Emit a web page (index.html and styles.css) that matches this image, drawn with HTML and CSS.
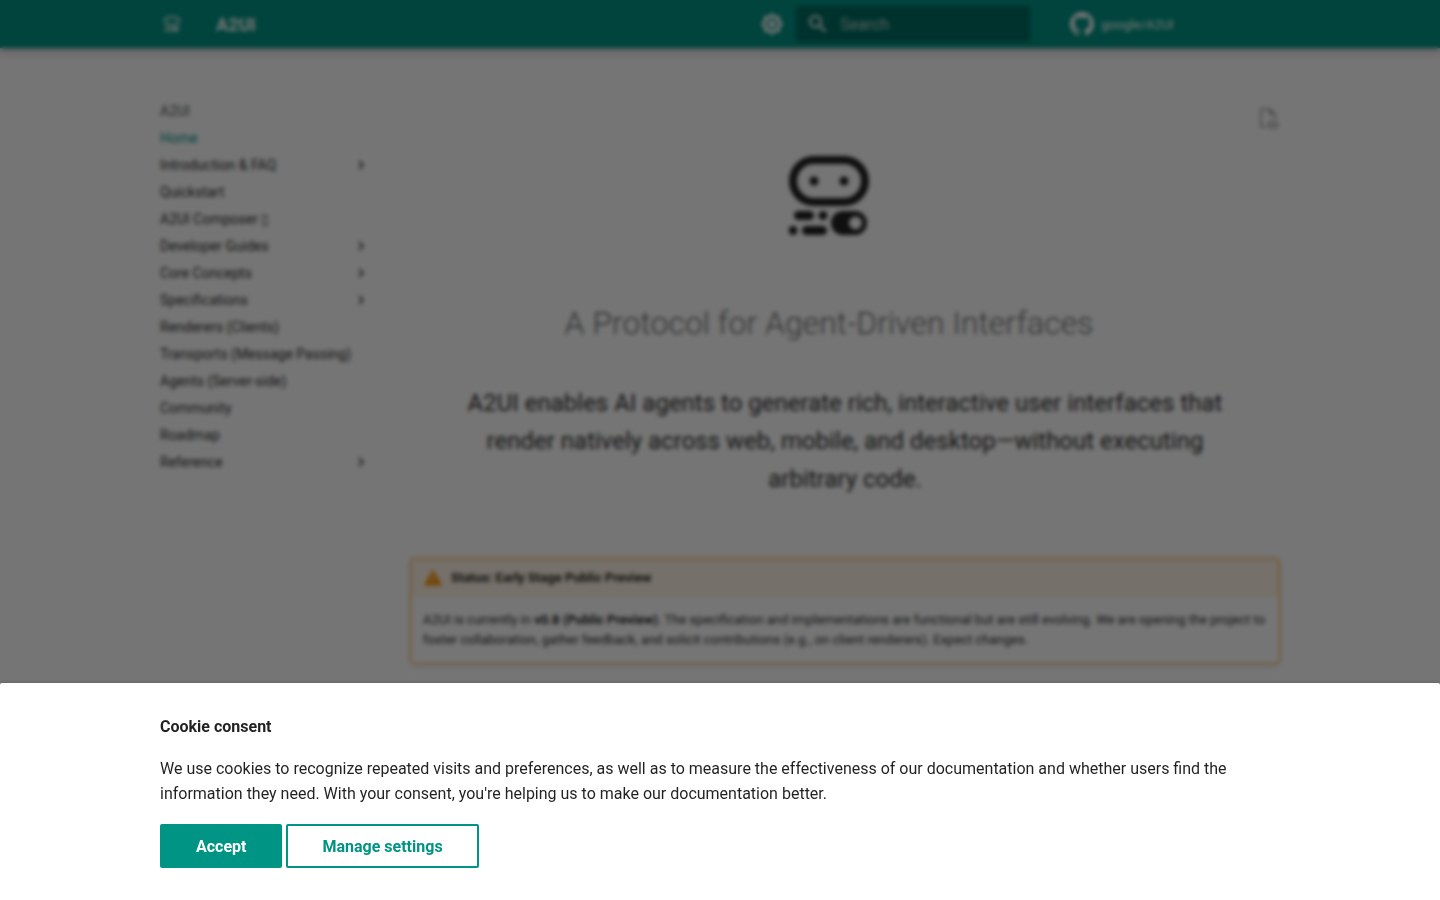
FILE: index.html
```html
<!DOCTYPE html>
<html lang="en">
<head>
    <meta charset="UTF-8">
    <meta name="viewport" content="width=device-width, initial-scale=1.0">
    <title>A2UI</title>
    <link rel="stylesheet" href="styles.css">
</head>
<body>
    <svg class="symbols" aria-hidden="true">
        <symbol id="logo" viewBox="0 0 80 80">
            <rect x="4" y="4" width="72" height="42" rx="21" fill="none" stroke="currentColor" stroke-width="8"/>
            <circle cx="25" cy="25" r="4.5"/>
            <circle cx="55" cy="25" r="4.5"/>
            <rect x="5" y="55" width="20" height="9" rx="4.5"/>
            <circle cx="34" cy="59.5" r="4.5"/>
            <circle cx="4" cy="74.5" r="4.5"/>
            <rect x="13" y="70" width="25" height="9" rx="4.5"/>
            <path fill-rule="evenodd" d="M54 55h12a12 12 0 0 1 0 24H54a12 12 0 0 1 0-24zm12.5 5.5a6.5 6.5 0 1 0 0 13 6.5 6.5 0 0 0 0-13z"/>
        </symbol>
        <symbol id="chevron" viewBox="0 0 24 24">
            <path d="M8.59 16.58 13.17 12 8.59 7.41 10 6l6 6-6 6z"/>
        </symbol>
    </svg>

    <header class="header">
        <nav class="header-inner" aria-label="Header">
            <a class="header-logo" href="#" aria-label="A2UI"><svg><use href="#logo"/></svg></a>
            <span class="header-title">A2UI</span>
            <button class="icon-button" type="button" aria-label="Switch theme">
                <svg viewBox="0 0 24 24"><path fill-rule="evenodd" d="M20 8.69V4h-4.69L12 .69 8.69 4H4v4.69L.69 12 4 15.31V20h4.69L12 23.31 15.31 20H20v-4.69L23.31 12zM12 6a6 6 0 1 1 0 12 6 6 0 0 1 0-12z"/><circle cx="12" cy="12" r="3.5"/></svg>
            </button>
            <label class="search">
                <svg viewBox="0 0 24 24"><path d="M9.5 3A6.5 6.5 0 0 1 16 9.5c0 1.61-.59 3.09-1.56 4.23l.27.27h.79l5 5-1.5 1.5-5-5v-.79l-.27-.27A6.52 6.52 0 0 1 9.5 16 6.5 6.5 0 0 1 3 9.5 6.5 6.5 0 0 1 9.5 3m0 2C7 5 5 7 5 9.5S7 14 9.5 14 14 12 14 9.5 12 5 9.5 5"/></svg>
                <input type="text" placeholder="Search" aria-label="Search">
            </label>
            <a class="source" href="#">
                <svg viewBox="0 0 16 16"><path d="M8 0C3.58 0 0 3.58 0 8c0 3.54 2.29 6.53 5.47 7.59.4.07.55-.17.55-.38 0-.19-.01-.82-.01-1.49-2.01.37-2.53-.49-2.69-.94-.09-.23-.48-.94-.82-1.13-.28-.15-.68-.52-.01-.53.63-.01 1.08.58 1.23.82.72 1.21 1.87.87 2.33.66.07-.52.28-.87.51-1.07-1.78-.2-3.64-.89-3.64-3.95 0-.87.31-1.59.82-2.15-.08-.2-.36-1.02.08-2.12 0 0 .67-.21 2.2.82.64-.18 1.32-.27 2-.27s1.36.09 2 .27c1.53-1.04 2.2-.82 2.2-.82.44 1.1.16 1.92.08 2.12.51.56.82 1.27.82 2.15 0 3.07-1.87 3.75-3.65 3.95.29.25.54.73.54 1.48 0 1.07-.01 1.93-.01 2.2 0 .21.15.46.55.38A8.01 8.01 0 0 0 16 8c0-4.42-3.58-8-8-8"/></svg>
                google/A2UI
            </a>
        </nav>
    </header>

    <div class="main">
        <nav class="sidebar" aria-label="Navigation">
            <ul>
                <li class="nav-title">A2UI</li>
                <li><a class="active" href="#">Home</a></li>
                <li><a href="#">Introduction &amp; FAQ <svg><use href="#chevron"/></svg></a></li>
                <li><a href="#">Quickstart</a></li>
                <li><a href="#">A2UI Composer ▯</a></li>
                <li><a href="#">Developer Guides <svg><use href="#chevron"/></svg></a></li>
                <li><a href="#">Core Concepts <svg><use href="#chevron"/></svg></a></li>
                <li><a href="#">Specifications <svg><use href="#chevron"/></svg></a></li>
                <li><a href="#">Renderers (Clients)</a></li>
                <li><a href="#">Transports (Message Passing)</a></li>
                <li><a href="#">Agents (Server-side)</a></li>
                <li><a href="#">Community</a></li>
                <li><a href="#">Roadmap</a></li>
                <li><a href="#">Reference <svg><use href="#chevron"/></svg></a></li>
            </ul>
        </nav>

        <main class="content">
            <div class="hero">
                <div class="hero-text">
                    <svg class="hero-logo"><use href="#logo"/></svg>
                    <h1>A Protocol for Agent-Driven Interfaces</h1>
                </div>
                <a class="view-source" href="#" aria-label="View source of this page">
                    <svg viewBox="0 0 24 24"><path d="M17 18c.56 0 1 .44 1 1s-.44 1-1 1-1-.44-1-1 .44-1 1-1m0-3c-2.73 0-5.06 1.66-6 4 .94 2.34 3.27 4 6 4s5.06-1.66 6-4c-.94-2.34-3.27-4-6-4m0 6.5a2.5 2.5 0 0 1-2.5-2.5 2.5 2.5 0 0 1 2.5-2.5 2.5 2.5 0 0 1 2.5 2.5 2.5 2.5 0 0 1-2.5 2.5M9.27 20H6V4h7v5h5v4.07c.7.08 1.36.25 2 .49V8l-6-6H6a2 2 0 0 0-2 2v16a2 2 0 0 0 2 2h4.5a8.15 8.15 0 0 1-1.23-2"/></svg>
                </a>
            </div>
            <p class="lead">A2UI enables AI agents to generate rich, interactive user interfaces that render natively across web, mobile, and desktop—without executing arbitrary code.</p>

            <div class="admonition">
                <p class="admonition-title">
                    <svg viewBox="0 0 24 24"><path d="M13 14h-2V9h2m0 9h-2v-2h2M1 21h22L12 2z"/></svg>
                    Status: Early Stage Public Preview
                </p>
                <p class="admonition-text">A2UI is currently in <strong>v0.8 (Public Preview)</strong>. The specification and implementations are functional but are still evolving. We are opening the project to foster collaboration, gather feedback, and solicit contributions (e.g., on client renderers). Expect changes.</p>
            </div>
        </main>
    </div>

    <div class="overlay"></div>
    <aside class="consent" role="dialog" aria-labelledby="consent-title">
        <form class="consent-inner">
            <h4 id="consent-title">Cookie consent</h4>
            <p>We use cookies to recognize repeated visits and preferences, as well as to measure the effectiveness of our documentation and whether users find the information they need. With your consent, you're helping us to make our documentation better.</p>
            <div class="consent-controls">
                <button class="button button-primary" type="button">Accept</button>
                <button class="button" type="button">Manage settings</button>
            </div>
        </form>
    </aside>
</body>
</html>
```

FILE: styles.css
```css
* {
    box-sizing: border-box;
    margin: 0;
    padding: 0;
}

body {
    min-height: 100vh;
    background: white;
    color: rgba(0, 0, 0, 0.87);
    font-family: Roboto, "Liberation Sans", sans-serif;
    font-size: 16px;
    line-height: 25px;
    overflow: hidden;
}

a {
    color: inherit;
    text-decoration: none;
}

svg {
    display: block;
    fill: currentColor;
    flex-shrink: 0;
}

.symbols {
    display: none;
}

/* header */
.header {
    background: #009485;
    color: white;
    box-shadow: 0 0 4px rgba(0, 0, 0, 0.1), 0 4px 8px rgba(0, 0, 0, 0.2);
}

.header-inner {
    display: flex;
    align-items: center;
    max-width: 1120px;
    height: 48px;
    margin: 0 auto;
}

.header-logo svg {
    width: 16px;
    height: 16px;
    margin: 0 4px;
}

.header-title {
    flex: 1;
    margin-left: 32px;
    font-size: 18px;
    font-weight: bold;
}

.icon-button {
    border: 0;
    background: none;
    color: inherit;
}

.icon-button svg {
    width: 24px;
    height: 24px;
}

.search {
    display: flex;
    align-items: center;
    gap: 10px;
    width: 234px;
    height: 36px;
    margin: 0 40px 0 12px;
    padding: 0 10px;
    border-radius: 2px;
    background: rgba(0, 0, 0, 0.26);
}

.search svg {
    width: 24px;
    height: 24px;
}

.search input {
    width: 100%;
    border: 0;
    background: none;
    color: inherit;
    font: inherit;
}

.search input::placeholder {
    color: rgba(255, 255, 255, 0.7);
}

.source {
    display: flex;
    align-items: center;
    gap: 7px;
    width: 210px;
    font-size: 13px;
}

.source svg {
    width: 24px;
    height: 24px;
}

/* page */
.main {
    display: flex;
    gap: 40px;
    max-width: 1120px;
    margin: 0 auto;
    padding-top: 54px;
}

.sidebar {
    width: 210px;
    flex-shrink: 0;
    font-size: 14px;
    line-height: 18px;
}

.sidebar ul {
    list-style: none;
}

.sidebar li {
    margin-bottom: 9px;
}

.sidebar a {
    display: flex;
    align-items: center;
    justify-content: space-between;
}

.sidebar svg {
    width: 18px;
    height: 18px;
}

.nav-title {
    color: rgba(0, 0, 0, 0.7);
}

.sidebar .active {
    color: #009485;
}

.content {
    flex: 1;
}

.hero {
    display: flex;
    gap: 8px;
    padding-top: 4px;
}

.hero-text {
    flex: 1;
    padding-top: 50px;
    text-align: center;
}

.hero-logo {
    width: 80px;
    height: 80px;
    margin: 0 auto 66px;
    overflow: visible;
}

.hero h1 {
    color: rgba(0, 0, 0, 0.6);
    font-size: 32px;
    font-weight: 300;
    line-height: 42px;
}

.view-source {
    height: 24px;
    color: rgba(0, 0, 0, 0.32);
}

.view-source svg {
    width: 24px;
    height: 24px;
}

.lead {
    margin: 40px 0 60px;
    padding: 0 40px;
    font-size: 24px;
    line-height: 38px;
    text-align: center;
}

.admonition {
    border: 1px solid #ff9100;
    border-radius: 4px;
    box-shadow: 0 4px 10px rgba(0, 0, 0, 0.05), 0 0 1px rgba(0, 0, 0, 0.1);
    font-size: 13px;
    line-height: 20px;
}

.admonition-title {
    display: flex;
    align-items: center;
    gap: 8px;
    padding: 9px 12px;
    background: rgba(255, 145, 0, 0.1);
    font-weight: bold;
}

.admonition-title svg {
    width: 20px;
    height: 20px;
    color: #ff9100;
}

.admonition-text {
    padding: 13px 8px 13px 12px;
}

/* cookie consent */
.overlay {
    position: fixed;
    inset: 0;
    background: rgba(0, 0, 0, 0.54);
    backdrop-filter: blur(2px);
}

.consent {
    position: fixed;
    right: 0;
    bottom: 0;
    left: 0;
    padding: 31px 24px 32px;
    border-radius: 2px 2px 0 0;
    background: white;
    box-shadow: 0 0 4px rgba(0, 0, 0, 0.2);
}

.consent-inner {
    max-width: 1120px;
    margin: 0 auto;
}

.consent h4 {
    margin-bottom: 17px;
}

.consent p {
    margin-bottom: 18px;
}

.consent-controls {
    display: flex;
    gap: 4px;
}

.button {
    height: 44px;
    padding: 0 34px;
    border: 2px solid #009485;
    border-radius: 2px;
    background: none;
    color: #009485;
    font: inherit;
    font-weight: bold;
}

.button-primary {
    background: #009485;
    color: white;
}
```
